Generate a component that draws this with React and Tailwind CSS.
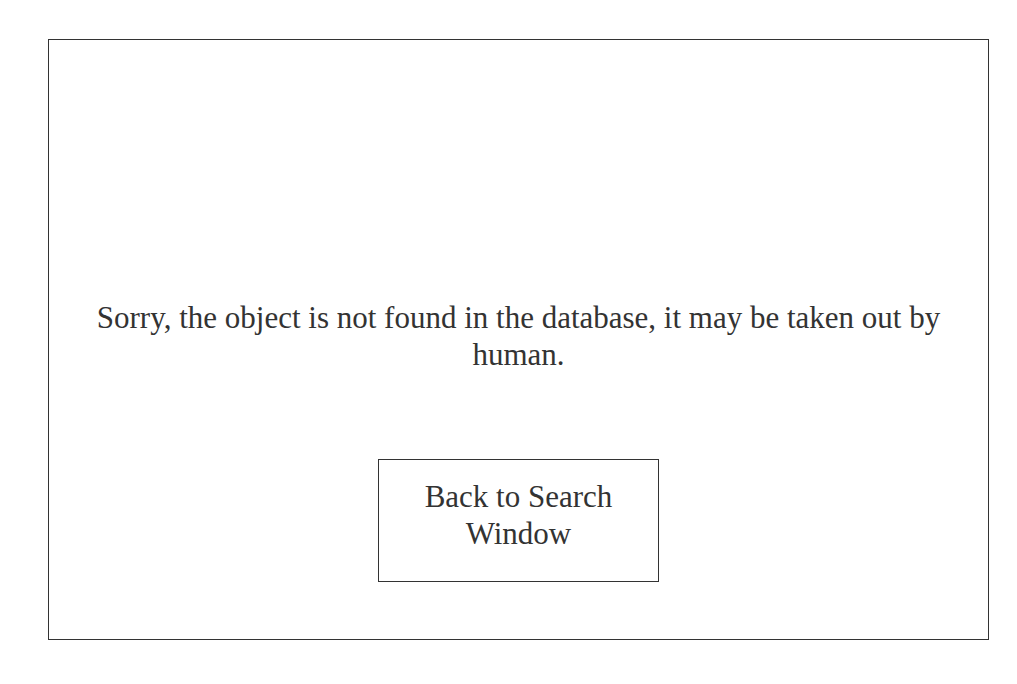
import React from "react";

export default function App() {
  return (
    <div className="w-[1017px] h-[684px] bg-white pt-[39px] pl-[48px] font-['Liberation_Serif',serif] text-[#333333]">
      <div className="w-[941px] h-[601px] border border-[#333333] flex flex-col items-center pt-[259px] px-[20px]">
        <p className="text-[31px] leading-[37px] text-center">
          Sorry, the object is not found in the database, it may be taken out by human.
        </p>
        <button className="mt-[86px] w-[281px] h-[123px] border border-[#333333] px-[40px] pt-[18px] pb-[30px] text-[31px] leading-[37px] text-center">
          Back to Search Window
        </button>
      </div>
    </div>
  );
}
